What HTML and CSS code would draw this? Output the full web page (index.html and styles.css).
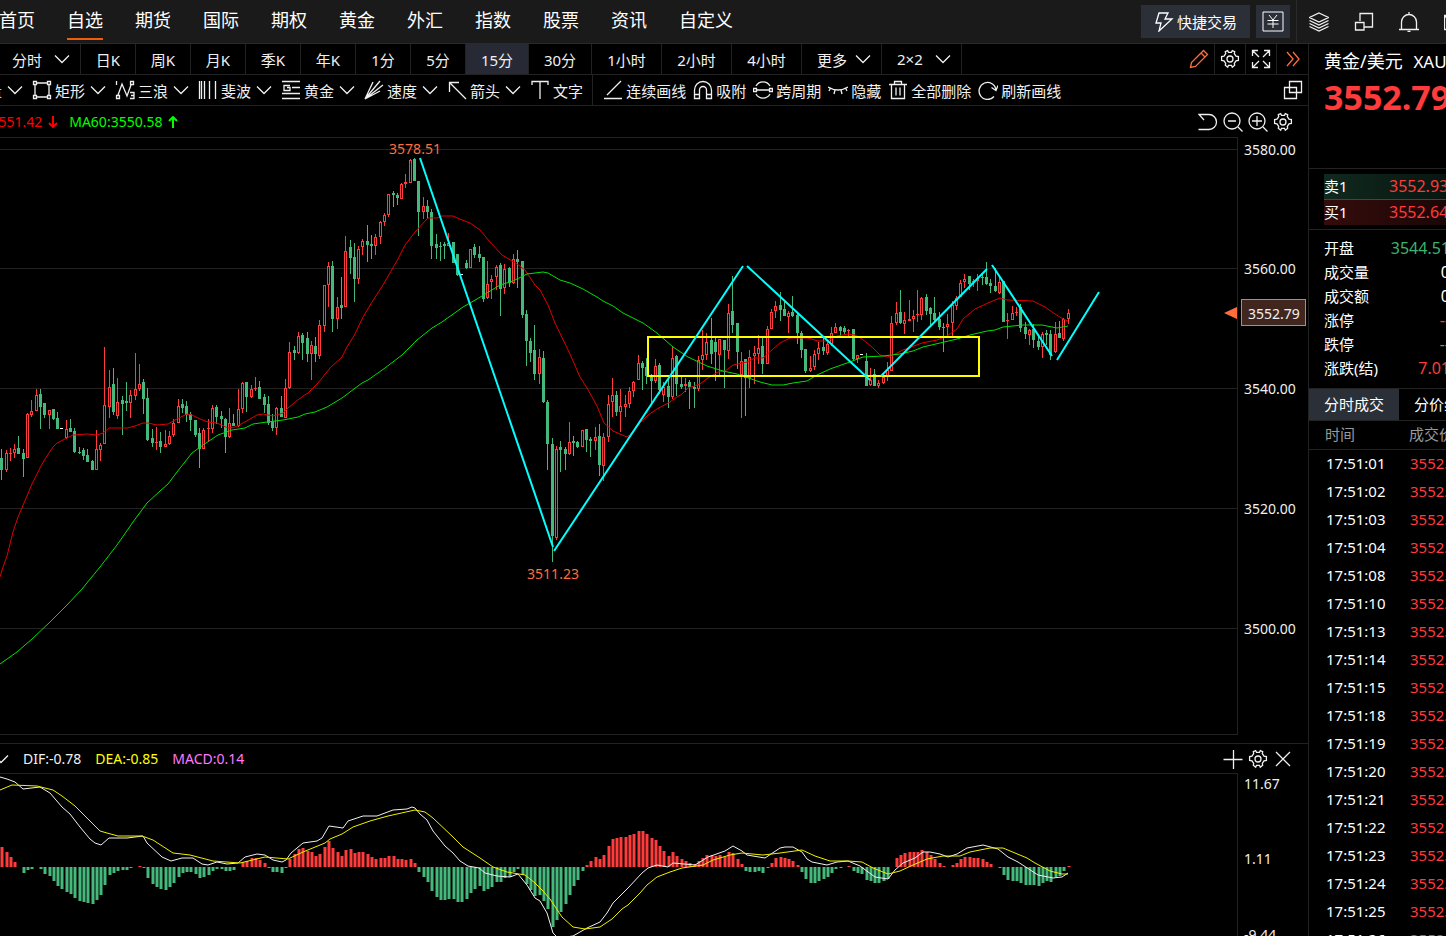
FILE: index.html
```html
<!DOCTYPE html>
<html lang="zh-CN">

<head>
    <meta charset="UTF-8">
    <meta name="viewport" content="width=device-width, initial-scale=1.0">
    <title>黄金/美元 XAUUSD 15分</title>
    <link rel="stylesheet" href="styles.css">
</head>

<body>
    <svg class="sprite" aria-hidden="true">
        <symbol id="chevron" viewBox="0 0 16 16">
            <path d="M1 4.500l7 7 7-7" />
        </symbol>
        <symbol id="gear" viewBox="0 0 20 20">
            <path d="M7.700 1.200l.8 1.600h3l.8-1.600 2.400 1-.4 1.900 1.700 2.600 2.400.3v3.900l-2.400.4-1.700 2.600.4 1.900-2.400 2-.8-2h-3l-.8 2-2.400-2 .4-1.900L4 11.300l-2.400-.4V7l2.400-.3 1.700-2.600-.4-1.900z" transform="translate(0 .5)" />
            <circle cx="10" cy="10" r="3" />
        </symbol>
    </svg>

    <header class="topbar">
        <nav class="main-nav">
            <a href="#">首页</a>
            <a href="#" class="active">自选</a>
            <a href="#">期货</a>
            <a href="#">国际</a>
            <a href="#">期权</a>
            <a href="#">黄金</a>
            <a href="#">外汇</a>
            <a href="#">指数</a>
            <a href="#">股票</a>
            <a href="#">资讯</a>
            <a href="#">自定义</a>
        </nav>
        <div class="trade-buttons">
            <button class="quick-trade">
                <svg class="icon" viewBox="0 0 20 20"><path d="M5 1h9l-3 6h7L5 19l2-8H2z" /></svg>
                快捷交易
            </button>
            <button class="currency" aria-label="货币">
                <svg viewBox="0 0 22 22"><path d="M1 1h20v19H1zM7 4l4 5 4-5M5.500 9.500h11M5.500 13h11M11 9v8" /></svg>
            </button>
        </div>
        <div class="top-icons">
            <button aria-label="图层">
                <svg class="icon" viewBox="0 0 20 20"><path d="M10 1l9.500 4.500L10 10 .5 5.500zM.5 8.500L10 13l9.500-4.500M.5 11.500L10 16l9.500-4.500M.5 14.500L10 19l9.500-4.500" /></svg>
            </button>
            <button aria-label="窗口">
                <svg class="icon" viewBox="0 0 20 20"><path d="M6 9V1.500h12.500V15H10M1.500 10.500H10V18H1.500z" /></svg>
            </button>
            <button aria-label="提醒">
                <svg class="icon" viewBox="0 0 20 20"><path d="M0 17.500h20M2.500 17V10a7.500 7.500 0 0 1 15 0v7M10 0v2.500M8.500 19.500h3" /></svg>
            </button>
            <button aria-label="邮件">
                <svg class="icon" viewBox="0 0 20 20"><path d="M.5 3.500h19v14H.5zM.5 4L10 11l9.500-7" /></svg>
            </button>
        </div>
    </header>

    <div class="workspace">
        <main class="chart-area">
            <div class="period-bar">
                <button class="period-menu">分时<svg class="chevron"><use href="#chevron" /></svg></button>
                <button>日K</button>
                <button>周K</button>
                <button>月K</button>
                <button>季K</button>
                <button>年K</button>
                <button>1分</button>
                <button>5分</button>
                <button class="medium active">15分</button>
                <button class="medium">30分</button>
                <button class="wide">1小时</button>
                <button class="wide">2小时</button>
                <button class="wide">4小时</button>
                <button class="period-menu">更多<svg class="chevron"><use href="#chevron" /></svg></button>
                <button class="period-menu">2×2<svg class="chevron"><use href="#chevron" /></svg></button>
                <div class="period-tools">
                    <button class="accent" aria-label="画线">
                        <svg class="icon" viewBox="0 0 20 20"><path d="M1.500 18.500l1-5L14.500 1.500l4 4L6.500 17.500zM12 4l4 4" /></svg>
                    </button>
                    <button aria-label="设置"><svg class="icon"><use href="#gear" /></svg></button>
                    <button aria-label="全屏">
                        <svg class="icon" viewBox="0 0 20 20"><path d="M1.500 7V1.500H7M13 1.500h5.500V7M18.500 13v5.500H13M7 18.500H1.500V13M2 2l6 6M18 2l-6 6M18 18l-6-6M2 18l6-6" /></svg>
                    </button>
                    <button class="accent" aria-label="展开">
                        <svg class="icon" viewBox="0 0 20 20"><path d="M4 3l6 7-6 7M10 3l6 7-6 7" /></svg>
                    </button>
                </div>
            </div>

            <div class="draw-bar">
                <div class="shape-tools">
                    <button>测量<svg class="chevron"><use href="#chevron" /></svg></button>
                    <button>
                        <svg class="icon" viewBox="0 0 20 20"><path d="M4 3h12M4 17h12M3 4v12M17 4v12M1.500 1.500h3v3h-3zM15.500 1.500h3v3h-3zM1.500 15.500h3v3h-3zM15.500 15.500h3v3h-3z" /></svg>
                        矩形<svg class="chevron"><use href="#chevron" /></svg>
                    </button>
                    <button>
                        <svg class="icon" viewBox="0 0 20 20"><path d="M1.500 1v4M3 15L7 4l5 12 4-11M1.500 15.500h3v3h-3zM15.500 1.500h3v3h-3zM15 12.500h4v6h-4M16 15.500h3" /></svg>
                        三浪<svg class="chevron"><use href="#chevron" /></svg>
                    </button>
                    <button>
                        <svg class="icon" viewBox="0 0 20 20"><path d="M1.500 1v18M3.500 1v18M6.500 1v18M11.500 1v18M17.500 1v18" /></svg>
                        斐波<svg class="chevron"><use href="#chevron" /></svg>
                    </button>
                    <button>
                        <svg class="icon" viewBox="0 0 20 20"><path d="M1 1.500h18M11 7.500h8M1 13.500h18M1 18.500h18M9 5.500H3v5h6v-3H6" /></svg>
                        黄金<svg class="chevron"><use href="#chevron" /></svg>
                    </button>
                    <button>
                        <svg class="icon" viewBox="0 0 20 20"><path d="M1 19L9 2M1 19L16 1M1 19L19 5M1 19l15-8" /></svg>
                        速度<svg class="chevron"><use href="#chevron" /></svg>
                    </button>
                    <button>
                        <svg class="icon" viewBox="0 0 20 20"><path d="M2.500 12V2.500H12M3 3l16 16" /></svg>
                        箭头<svg class="chevron"><use href="#chevron" /></svg>
                    </button>
                    <button>
                        <svg class="icon" viewBox="0 0 20 20"><path d="M2 5V1.500h16V5M10 2v17" /></svg>
                        文字
                    </button>
                </div>
                <div class="line-tools">
                    <button>
                        <svg class="icon" viewBox="0 0 20 20"><path d="M1 18.500h18M4 15L18 1" /></svg>
                        连续画线
                    </button>
                    <button>
                        <svg class="icon" viewBox="0 0 20 20"><path d="M1.500 18.500V10a8.500 8.500 0 0 1 17 0v8.500h-5V10a3.500 3.500 0 0 0-7 0v8.500zM1.500 14.500h5M13.500 14.500h5" /></svg>
                        吸附
                    </button>
                    <button>
                        <svg class="icon" viewBox="0 0 20 20"><path d="M3 6a8 8 0 0 1 14 0M3 14a8 8 0 0 0 14 0M3 10h14M.5 8.500h3v3h-3zM16.500 8.500h3v3h-3z" /></svg>
                        跨周期
                    </button>
                    <button>
                        <svg class="icon" viewBox="0 0 20 20"><path d="M0 7q10 6 20 0M2.500 8L1 11M7 10l-1 4M13 10l1 4M17.500 8l1.500 3" /></svg>
                        隐藏
                    </button>
                    <button>
                        <svg class="icon" viewBox="0 0 20 20"><path d="M1 4.500h18M6.500 4V1.500h7V4M3.500 5v13.500h13V5M8 7.500v8M12 7.500v8" /></svg>
                        全部删除
                    </button>
                    <button>
                        <svg class="icon" viewBox="0 0 20 20"><path d="M16 16.500a8.500 8.500 0 1 1 2-6.500M13.500 7.500l4.500 3 2-5" /></svg>
                        刷新画线
                    </button>
                </div>
                <button class="float-button" aria-label="浮动">
                    <svg class="icon" viewBox="0 0 20 20"><path d="M6.500 1.500h12v11h-12zM1.500 7.500h12v11h-12z" /></svg>
                </button>
            </div>

            <div class="indicator-bar ma-bar">
                <div class="indicator-values">
                    <span class="ma20">MA20:3551.42</span>
                    <svg class="trend ma20" viewBox="0 0 10 12"><path d="M5 0v10M1 7l4 4 4-4" /></svg>
                    <span class="ma60">MA60:3550.58</span>
                    <svg class="trend ma60" viewBox="0 0 10 12"><path d="M5 12V2M1 5l4-4 4 4" /></svg>
                </div>
                <div class="indicator-tools">
                    <button aria-label="撤销">
                        <svg class="icon" viewBox="0 0 20 20"><path d="M6 8L1 2.500h10a7.500 7.500 0 0 1 0 15H.5" /></svg>
                    </button>
                    <button aria-label="缩小">
                        <svg class="icon" viewBox="0 0 20 20"><circle cx="9" cy="9" r="8" /><path d="M5 9h8M15 15l4.500 4.500" /></svg>
                    </button>
                    <button aria-label="放大">
                        <svg class="icon" viewBox="0 0 20 20"><circle cx="9" cy="9" r="8" /><path d="M4 9h10M9 4v10M15 15l4.500 4.500" /></svg>
                    </button>
                    <button aria-label="指标设置"><svg class="icon"><use href="#gear" /></svg></button>
                </div>
            </div>
            <svg class="chart" id="price-chart" viewBox="0 137 1308 606" preserveAspectRatio="xMinYMin meet"></svg>

            <div class="indicator-bar macd-bar">
                <div class="indicator-values">
                    <svg class="chevron"><use href="#chevron" /></svg>
                    <span>DIF:-0.78</span>
                    <span class="dea">DEA:-0.85</span>
                    <span class="macd">MACD:0.14</span>
                </div>
                <div class="indicator-tools">
                    <button aria-label="添加">
                        <svg class="icon" viewBox="0 0 20 20"><path d="M.5 10.500h19M10.500 1v19" /></svg>
                    </button>
                    <button aria-label="MACD设置"><svg class="icon"><use href="#gear" /></svg></button>
                    <button aria-label="关闭">
                        <svg class="icon" viewBox="0 0 20 20"><path d="M3 3l14 14M17 3L3 17" /></svg>
                    </button>
                </div>
            </div>
            <svg class="chart" id="macd-chart" viewBox="0 773 1308 180" preserveAspectRatio="xMinYMin meet"></svg>
        </main>

        <aside class="quote">
            <div class="quote-head">
                <h1>黄金/美元 <span>XAUUSD</span></h1>
                <strong>3552.79</strong>
            </div>
            <div class="quote-book">
                <div class="sell"><span>卖1</span><b>3552.93</b></div>
                <div class="buy"><span>买1</span><b>3552.64</b></div>
            </div>
            <dl class="quote-stats">
                <div><dt>开盘</dt><dd class="down">3544.51</dd></div>
                <div><dt>成交量</dt><dd>0</dd></div>
                <div><dt>成交额</dt><dd>0</dd></div>
                <div><dt>涨停</dt><dd class="up">--</dd></div>
                <div><dt>跌停</dt><dd class="down">--</dd></div>
                <div><dt>涨跌(结)</dt><dd class="up">7.01</dd></div>
            </dl>
            <div class="quote-tabs">
                <button class="active">分时成交</button>
                <button>分价线</button>
            </div>
            <table class="ticks">
                <thead>
                    <tr><th>时间</th><th>成交价</th></tr>
                </thead>
                <tbody>
                    <tr><td>17:51:01</td><td>3552.79</td></tr>
                    <tr><td>17:51:02</td><td>3552.79</td></tr>
                    <tr><td>17:51:03</td><td>3552.79</td></tr>
                    <tr><td>17:51:04</td><td>3552.79</td></tr>
                    <tr><td>17:51:08</td><td>3552.79</td></tr>
                    <tr><td>17:51:10</td><td>3552.79</td></tr>
                    <tr><td>17:51:13</td><td>3552.79</td></tr>
                    <tr><td>17:51:14</td><td>3552.79</td></tr>
                    <tr><td>17:51:15</td><td>3552.79</td></tr>
                    <tr><td>17:51:18</td><td>3552.79</td></tr>
                    <tr><td>17:51:19</td><td>3552.79</td></tr>
                    <tr><td>17:51:20</td><td>3552.79</td></tr>
                    <tr><td>17:51:21</td><td>3552.79</td></tr>
                    <tr><td>17:51:22</td><td>3552.79</td></tr>
                    <tr><td>17:51:23</td><td>3552.79</td></tr>
                    <tr><td>17:51:24</td><td>3552.79</td></tr>
                    <tr><td>17:51:25</td><td>3552.79</td></tr>
                    <tr><td>17:51:26</td><td>3552.79</td></tr>
                </tbody>
            </table>
        </aside>
    </div>

    <script src="chart.js"></script>
</body>

</html>
```
FILE: styles.css
```css
* {
    box-sizing: border-box;
}

body {
    margin: 0;
    height: 100vh;
    display: flex;
    flex-direction: column;
    overflow: hidden;
    background-color: #000;
    color: #f0f0f0;
    font-family: "Noto Sans", "Noto Sans CJK SC", sans-serif;
    font-size: 15px;
}

button {
    display: flex;
    align-items: center;
    justify-content: center;
    margin: 0;
    padding: 0;
    border: none;
    background: none;
    color: inherit;
    font: inherit;
    white-space: nowrap;
    cursor: pointer;
}

svg {
    flex: none;
    fill: none;
    stroke: currentColor;
}

.sprite {
    display: none;
}

.icon {
    width: 20px;
    height: 20px;
    stroke-width: 1.3;
}

.chevron {
    width: 16px;
    height: 16px;
    stroke-width: 1.3;
}

/* Top bar */
.topbar {
    display: flex;
    flex: none;
    height: 44px;
    background-color: #1a1a1a;
    border-bottom: 1px solid #2a2a2a;
}

.main-nav {
    display: flex;
    gap: 32px;
    flex: 1;
    margin-left: -1px;
}

.main-nav a {
    height: 40px;
    line-height: 40px;
    font-size: 18px;
    color: #fff;
    text-decoration: none;
    white-space: nowrap;
}

.main-nav a.active {
    border-bottom: 2px solid #f25a0c;
}

.trade-buttons {
    display: flex;
    gap: 6px;
    padding: 5px 6px 5px 0;
    border-right: 1px solid #2a2a2a;
}

.trade-buttons button {
    background-color: #2b2f38;
    color: #fff;
}

.quick-trade {
    width: 109px;
    gap: 3px;
}

.currency {
    width: 34px;
}

.currency svg {
    width: 22px;
    height: 22px;
}

.top-icons {
    display: flex;
    gap: 25px;
    width: 149px;
    padding-left: 12px;
    overflow: hidden;
}

/* Chart column */
.workspace {
    display: flex;
    flex: 1;
    min-height: 0;
}

.chart-area {
    flex: 1;
    min-width: 0;
    overflow: hidden;
}

.period-bar {
    display: flex;
    height: 31px;
    border-bottom: 1px solid #222;
}

.period-bar > button {
    width: 55px;
    border-right: 1px solid #222;
}

.period-bar > .medium {
    width: 63px;
}

.period-bar > .wide {
    width: 70px;
}

.period-bar > .period-menu {
    justify-content: space-between;
    width: 80px;
    padding: 0 10px 0 15px;
}

.period-bar > .period-menu:first-child {
    width: 81px;
    padding-left: 12px;
}

.period-bar > .active {
    background-color: #272935;
}

.period-tools {
    display: flex;
    margin-left: auto;
}

.period-tools button {
    width: 31px;
    border-right: 1px solid #222;
}

.period-tools button:last-child {
    border-right: none;
}

.accent {
    color: #ff6e3c;
}

.draw-bar {
    display: flex;
    height: 31px;
    border-bottom: 1px solid #222;
}

.shape-tools {
    display: flex;
    gap: 9px;
    margin-left: -28px;
    padding-right: 9px;
    border-right: 1px solid #222;
}

.shape-tools button,
.line-tools button {
    gap: 3px;
}

.shape-tools .chevron {
    margin-left: 2px;
}

.line-tools {
    display: flex;
    gap: 7px;
    margin-left: 10px;
}

.float-button {
    margin-left: auto;
    margin-right: 5px;
}

.indicator-bar {
    display: flex;
    justify-content: space-between;
    height: 31px;
    padding-right: 15px;
    font-size: 14px;
}

.indicator-values {
    display: flex;
    align-items: center;
}

.indicator-tools {
    display: flex;
    gap: 5px;
}

.ma-bar .indicator-values {
    gap: 6px;
    margin-left: -51px;
}

.ma-bar span.ma60 {
    margin-left: 5px;
}

.trend {
    width: 10px;
    height: 12px;
    stroke-width: 2;
}

.ma20 {
    color: #f00;
}

.ma60 {
    color: #0f0;
}

.macd-bar {
    height: 30px;
    border-top: 1px solid #222;
}

.macd-bar .indicator-values {
    gap: 14px;
    margin-left: -7px;
}

.dea {
    color: #ff0;
}

.macd {
    color: #ff78ff;
}

.chart {
    display: block;
    width: 100%;
    font-size: 14px;
}

.chart text {
    fill: #f0f0f0;
    stroke: none;
}

.chart .extreme {
    fill: #ff6e3c;
    text-anchor: middle;
}

.frame,
.bars {
    shape-rendering: crispEdges;
}

.frame {
    stroke: #222;
}

.candle-up {
    stroke: #ff3c3c;
}

.candle-down {
    stroke: #45b97c;
    fill: #45b97c;
}

.candle-flat {
    stroke: #fff;
}

.bar-up {
    fill: #ff3c3c;
    stroke: none;
}

.bar-down {
    fill: #45b97c;
    stroke: none;
}

.bar-edge {
    opacity: 0.5;
}

.line-ma20 {
    stroke: #e00000;
}

.line-ma60 {
    stroke: #00e000;
}

.line-dif {
    stroke: #f0f0f0;
}

.line-dea {
    stroke: #f0f000;
}

.trend-line {
    stroke: #0ff;
    stroke-width: 2;
}

.range-box {
    stroke: #ff0;
    stroke-width: 2;
}

.price-tag {
    fill: #40261e;
    stroke: #ff6e3c;
}

.price-pointer {
    fill: #ff6e3c;
    stroke: none;
}

/* Quote panel */
.quote {
    flex: none;
    width: 138px;
    overflow: hidden;
    border-left: 1px solid #222;
    color: #fff;
    white-space: nowrap;
}

.quote-head {
    height: 125px;
    padding: 3px 15px;
    border-bottom: 1px solid #222;
}

.quote-head h1 {
    margin: 0;
    font-size: 18px;
    font-weight: normal;
    line-height: 28px;
}

.quote-head h1 span {
    margin-left: 6px;
    font-size: 17px;
}

.quote-head strong {
    display: block;
    font-size: 34px;
    line-height: 42px;
    color: #ff3b3b;
}

.quote-book {
    padding: 5px 0 4px 15px;
    border-bottom: 1px solid #222;
}

.quote-book div {
    display: flex;
    width: 260px;
    height: 25px;
    line-height: 25px;
}

.quote-book span {
    width: 65px;
}

.quote-book b {
    font-size: 16px;
    font-weight: normal;
    color: #ff3b3b;
}

.quote-book .sell {
    height: 26px;
    background: linear-gradient(to right, #10291e, #000);
    border-bottom: 1px solid #444;
}

.quote-book .buy {
    background: linear-gradient(to right, #350c0c, #000);
}

.quote-stats {
    width: 141px;
    margin: 0;
    padding: 6px 0 8px 15px;
}

.quote-stats div {
    display: flex;
    justify-content: space-between;
    line-height: 24px;
}

.quote-stats dd {
    margin: 0;
    font-size: 16px;
}

.up {
    color: #ff3b3b;
}

.down {
    color: #3db46d;
}

.quote-tabs {
    display: flex;
    height: 33px;
    border-top: 1px solid #222;
    border-bottom: 1px solid #222;
}

.quote-tabs button {
    padding: 0 15px 2px;
}

.quote-tabs .active {
    background-color: #2b2f38;
}

.ticks {
    width: 260px;
    table-layout: fixed;
    border-collapse: collapse;
}

.ticks th {
    height: 28px;
    padding: 0 0 2px 16px;
    border-bottom: 1px solid #222;
    color: #999;
    font-weight: normal;
    text-align: left;
}

.ticks td {
    height: 28px;
    padding: 0 0 0 17px;
}

.ticks th:first-child {
    width: 84px;
}

.ticks td:last-child {
    color: #ff3b3b;
}
```
FILE: chart.js
```javascript
const STEP = 4.3;
const PLOT_RIGHT = 1237;
const ZERO = 867;

// direction (u = up, d = down, n = unchanged), high, body top, body bottom, low
const candles = `
d 449 458 470 480,u 450 453 470 472,u 448 453 454 461,u 444 449 453 458,d 436 448 454 454,d 449 453 459 477,
u 413 414 458 458,u 400 411 415 417,u 389 395 411 411,d 389 394 407 429,d 403 403 415 418,u 410 410 415 429,
d 409 409 419 420,d 412 418 429 429,n 428 428 429 429,u 420 429 438 439,d 419 428 432 432,d 428 431 452 453,
d 447 452 453 454,d 448 450 456 460,d 449 455 462 462,d 460 461 470 470,u 430 449 470 470,u 443 445 450 461,
u 347 405 444 444,u 370 387 407 418,d 368 384 412 415,u 378 402 416 419,d 396 400 404 435,d 382 401 403 411,
u 390 395 403 418,u 353 389 396 400,u 364 384 389 391,d 379 382 399 414,d 388 398 440 441,d 429 438 443 447,
u 427 442 443 450,d 432 441 447 453,u 430 444 447 447,u 431 436 444 445,u 419 423 435 437,u 399 406 423 423,
d 399 404 408 413,d 401 406 415 422,d 412 414 420 431,d 420 420 435 437,d 428 433 449 468,u 428 430 449 449,
u 419 428 429 442,u 405 408 429 433,d 405 407 417 424,d 411 416 419 428,d 418 419 437 453,u 408 423 437 438,
d 414 423 426 426,u 389 409 426 427,u 382 383 409 413,d 382 382 397 412,u 385 389 397 398,u 377 388 389 391,
d 381 387 399 399,d 394 397 405 413,d 396 404 423 425,d 414 421 428 431,u 407 408 428 435,d 396 408 417 417,
u 379 388 418 418,u 342 352 388 389,d 346 350 353 360,u 332 336 353 354,d 333 335 343 360,d 332 338 354 362,
u 341 345 354 380,d 337 346 354 362,u 320 325 356 359,u 285 285 326 332,u 262 266 285 307,d 261 266 319 332,
u 297 307 319 329,d 277 305 308 319,u 236 251 307 307,d 240 247 258 274,d 243 257 279 302,u 246 249 279 284,
u 239 241 247 255,d 225 241 245 262,d 235 244 246 259,u 234 237 246 255,u 221 222 237 244,u 213 215 222 226,
u 194 194 215 217,d 191 193 195 207,d 193 195 198 205,u 183 184 199 199,u 174 182 184 188,u 159 160 183 183,
d 158 159 181 181,d 181 181 212 236,u 197 206 212 219,d 200 206 212 218,d 209 212 246 259,d 234 244 248 259,
d 242 246 247 261,d 242 244 246 259,u 233 243 246 246,d 242 242 263 263,d 254 254 275 276,n 274 274 275 275,
d 260 263 268 269,u 249 249 268 268,d 244 247 255 258,d 246 254 258 262,d 257 257 299 302,u 261 284 298 299,
u 275 279 282 299,u 265 267 277 290,d 263 265 289 316,u 264 269 288 294,d 267 268 283 287,u 254 259 283 284,
d 250 259 262 288,d 261 261 315 318,d 310 314 341 366,d 338 341 353 362,d 325 350 374 380,u 349 357 374 384,
d 351 358 402 403,d 400 402 444 470,d 438 444 536 562,u 446 449 538 540,d 441 447 450 472,d 447 449 454 470,
u 422 442 454 455,d 436 441 443 456,d 441 442 447 448,u 430 430 447 447,d 429 429 440 452,d 437 439 441 457,
u 427 437 441 450,d 424 436 465 476,u 433 437 466 481,u 395 404 437 442,u 378 395 402 417,d 391 395 412 416,
u 389 406 412 432,u 395 404 407 417,u 387 391 404 408,u 381 382 391 397,u 355 363 380 380,d 361 363 368 390,
d 358 367 376 384,d 374 375 381 403,u 359 366 381 383,d 363 365 390 394,u 382 387 395 402,d 376 386 397 408,
u 347 358 397 399,d 355 356 384 396,d 376 384 387 389,u 378 384 386 392,d 380 382 387 409,d 382 387 389 408,
u 356 360 389 391,u 330 355 360 370,u 333 342 355 360,d 318 340 354 364,d 336 342 352 381,u 339 339 355 377,
d 340 340 350 388,u 304 313 351 359,d 276 311 325 333,d 323 323 352 369,u 352 361 375 418,d 359 359 378 416,
u 350 357 378 388,u 346 353 356 384,u 335 348 354 364,d 337 346 364 374,u 326 329 364 364,u 309 312 329 329,
u 301 306 311 318,d 292 305 310 321,d 302 309 316 316,u 311 313 317 333,d 296 312 316 317,d 313 315 333 344,
d 331 333 350 358,d 349 349 371 373,u 356 368 371 372,u 350 354 367 370,u 342 348 354 360,d 337 347 351 355,
u 342 344 353 355,u 327 333 344 346,u 323 327 333 333,d 326 327 331 336,d 326 328 332 334,u 329 330 331 336,
d 329 329 359 361,u 355 355 359 363,n 354 354 355 355,d 353 361 386 386,u 368 380 385 386,d 369 374 386 386,
u 380 383 386 388,u 373 377 383 384,u 362 370 376 381,u 316 323 371 371,u 302 313 323 325,d 290 312 323 324,
u 312 320 324 334,u 300 319 321 321,u 310 316 319 332,u 290 314 315 322,u 297 298 315 320,d 294 297 311 315,
d 307 308 314 327,d 297 313 320 322,d 312 319 327 330,d 323 327 328 352,u 314 324 327 336,u 301 305 323 336,
u 296 298 306 310,u 280 283 297 297,u 274 279 282 288,d 276 276 284 290,u 279 281 282 287,u 274 278 281 291,
d 273 277 278 285,d 262 277 284 285,d 279 283 286 293,d 268 286 291 292,u 277 282 293 294,d 281 281 322 322,
u 313 320 321 339,u 306 313 320 320,u 307 312 313 316,d 304 307 328 332,d 322 327 334 339,u 329 330 335 345,
d 324 329 340 348,d 335 341 347 350,u 332 334 347 358,d 330 333 335 345,d 330 334 355 360,u 322 334 352 353,
d 321 333 338 338,u 318 319 339 341,u 309 313 319 324`.split(',').map(row => row.trim().split(' '));

const histogram = [
    20, 15, 10, 5, 0, -6, -3, -2, 0, -2, -7, -9, -14, -19, -22, -25, -27, -31, -34, -35, -36, -37, -33, -28, -18,
    -8, -6, -4, -3, -3, -1, 0, 1, -1, -11, -17, -20, -22, -23, -20, -16, -10, -6, -5, -5, -7, -11, -10, -8, -4,
    -2, -2, -4, -4, -3, 0, 5, 6, 9, 9, 7, 4, -1, -5, -5, -6, -1, 8, 13, 18, 19, 16, 15, 11, 13,
    20, 26, 19, 15, 11, 17, 18, 14, 15, 15, 13, 10, 8, 9, 9, 11, 11, 8, 8, 7, 8, 4, -5, -10, -15,
    -24, -30, -33, -33, -32, -32, -35, -35, -32, -26, -22, -19, -24, -22, -20, -15, -15, -11, -10, -5, -2, -8, -17, -23, -29,
    -28, -34, -42, -60, -53, -45, -37, -28, -19, -13, -4, 2, 6, 10, 8, 12, 21, 28, 29, 30, 30, 32, 33, 36, 36,
    33, 29, 27, 21, 16, 11, 15, 11, 8, 6, 4, 3, 6, 9, 12, 12, 11, 12, 10, 15, 14, 8, 3, -4, -5,
    -5, -4, -6, -1, 4, 9, 10, 9, 8, 6, 2, -5, -12, -16, -16, -14, -12, -10, -6, -2, -1, 0, 1, -4, -6,
    -7, -13, -14, -16, -16, -14, -12, 0, 9, 12, 14, 15, 15, 15, 17, 15, 12, 8, 4, 1, 0, 2, 4, 8, 10,
    10, 9, 9, 8, 5, 3, 0, -1, -8, -13, -14, -14, -16, -18, -18, -18, -19, -16, -14, -15, -10, -9, -4, 1
];

const ma20 = `0,577 2,570 7,556 13,532 18,517 24,503 32,484 40,468 45,459 53,447 57,443 65,439 73,435 87,434 97,435
103,433 109,428 127,428 135,426 143,423 148,423 157,425 168,424 175,420 187,414 192,415 200,419 208,422 217,423
228,428 235,427 243,423 257,415 263,414 273,416 283,413 289,407 303,396 308,393 318,383 330,368 342,357 347,347
355,334 363,317 372,302 383,285 398,259 405,245 415,232 428,218 437,218 442,216 453,216 462,220 470,223 480,230
490,242 502,255 517,264 525,270 535,285 540,290 548,305 555,323 570,354 580,377 587,388 592,397 597,406 604,423
613,431 627,437 630,435 640,423 648,415 657,409 670,402 677,397 682,394 688,388 700,384 708,378 718,372 725,371
733,365 747,362 755,358 763,358 772,350 780,343 790,338 808,338 818,341 827,341 837,336 848,334 855,335 862,339
872,347 880,355 887,357 893,355 903,350 922,343 937,340 947,336 957,329 963,319 975,309 988,303 1000,298 1007,300
1033,301 1045,307 1052,312 1063,319 1068,321`;

const ma60 = `0,664 17,652 32,639 50,622 67,605 82,589 100,567 117,545 133,522 147,503 160,491 168,484 177,472 192,453
203,445 218,435 232,430 245,428 253,424 267,422 283,420 298,417 305,414 315,412 327,407 342,398 362,383 368,380
385,368 402,355 417,340 432,328 442,322 463,307 470,303 477,299 487,293 500,285 513,281 527,274 543,272 548,273
560,280 570,283 583,289 597,297 603,301 613,306 623,313 643,323 657,333 673,347 688,357 707,366 723,371 737,374
760,382 772,385 783,385 793,383 807,381 817,375 830,369 847,363 863,357 883,356 900,354 913,351 923,347 957,339
970,335 987,331 995,330 1003,327 1023,325 1042,325 1057,328 1068,326`;

const dif = `0,777 7,779 15,782 23,789 40,787 45,790 50,793 62,807 70,814 80,827 90,839 95,843 101,845 109,838 127,838
143,836 147,843 162,857 171,861 182,858 193,858 202,864 208,865 217,862 227,864 238,863 245,857 257,854 265,855
273,860 282,862 286,860 291,853 303,843 317,841 322,838 329,826 343,828 348,821 363,816 377,816 393,810 407,809
412,807 415,808 420,814 427,820 433,831 445,846 453,853 460,861 468,866 479,868 485,873 497,876 510,877 518,874
527,885 535,898 540,901 547,913 553,933 558,938 573,936 587,928 600,922 607,913 613,903 622,894 628,888 642,873
648,868 657,865 668,867 673,863 695,865 708,857 725,851 733,846 742,851 747,855 765,858 780,848 785,847 793,847
802,852 807,859 812,862 827,865 837,862 848,861 860,866 875,877 888,879 895,870 903,863 915,858 923,852 930,852
940,854 948,857 957,854 967,848 983,845 998,849 1008,857 1018,862 1038,875 1053,878 1062,877 1068,873`;

const dea = `0,790 12,785 37,786 53,790 62,796 75,806 88,819 100,831 107,833 118,836 142,836 153,840 173,853 190,855
213,861 240,863 265,857 288,859 303,852 325,843 330,839 342,834 353,827 370,821 388,816 415,810 425,812 433,818
453,837 463,847 480,858 493,867 507,872 525,875 535,883 543,891 550,899 562,917 573,927 585,929 600,927 612,919
622,909 628,905 635,898 640,893 647,885 657,877 670,872 682,868 703,865 713,860 730,855 742,853 763,855 780,853
802,850 815,856 830,861 848,861 862,862 873,868 888,874 900,871 913,865 927,859 943,856 960,856 970,852 990,848
1003,848 1015,853 1027,858 1035,863 1050,871 1062,874 1068,874`;

const columnX = index => Math.floor(1.75 + STEP * index);

function drawCandle([direction, high, top, bottom, low], index) {
    const x = columnX(index);
    if (direction === 'n') {
        return `<path class="candle-flat" d="M${x - 1} ${+top + 0.5}h3" />`;
    }
    const height = Math.max(bottom - top - 1, 0);
    const body = height === 0
        ? `M${x - 1} ${+top + 0.5}h3`
        : `M${x - 0.5} ${+top + 0.5}h2v${height}h-2z`;
    const name = direction === 'u' ? 'candle-up' : 'candle-down';
    return `<path class="${name}" d="M${x + 0.5} ${high}V${top}${body}M${x + 0.5} ${bottom}V${low}" />`;
}

// two bright columns with a dimmer one on each side
function drawBar(value, index) {
    const x = columnX(index);
    const y = value > 0 ? ZERO - value : ZERO;
    const height = Math.abs(value);
    const name = value > 0 ? 'bar-up' : 'bar-down';
    return `<rect class="${name} bar-edge" x="${x - 1}" y="${y}" width="4" height="${height}" />
        <rect class="${name}" x="${x}" y="${y}" width="2" height="${height}" />`;
}

const gridLevels = [3580, 3560, 3540, 3520, 3500];
const gridY = [149, 268, 388, 508, 628];

document.getElementById('price-chart').innerHTML = `
    <path class="frame" d="M0 137.5H${PLOT_RIGHT}.5V734.5H0${gridY.map(y => `M0 ${y}.5H${PLOT_RIGHT}`).join('')}" />
    ${gridLevels.map((level, i) => `<text x="1244" y="${gridY[i] + 6}">${level.toFixed(2)}</text>`).join('')}
    <g class="bars">${candles.map(drawCandle).join('')}</g>
    <polyline class="line-ma20" points="${ma20}" />
    <polyline class="line-ma60" points="${ma60}" />
    <rect class="range-box" x="648" y="337" width="331" height="39" />
    <path class="trend-line" d="M420 158L553 547M554 551L743 266M747 266L870 380M881 376L987 269M992 265L1052 356M1057 360L1099 292" />
    <text class="extreme" x="415" y="154">3578.51</text>
    <text class="extreme" x="553" y="579">3511.23</text>
    <path class="price-pointer" d="M1224 313l13-6v12z" />
    <rect class="price-tag" x="1241.500" y="299.500" width="64" height="26" />
    <text x="1248" y="319">3552.79</text>`;

document.getElementById('macd-chart').innerHTML = `
    <path class="frame" d="M0 773.5H${PLOT_RIGHT}.5V960" />
    <g class="bars">${histogram.map(drawBar).join('')}</g>
    <polyline class="line-dif" points="${dif}" />
    <polyline class="line-dea" points="${dea}" />
    <text x="1244" y="789">11.67</text>
    <text x="1244" y="864">1.11</text>
    <text x="1244" y="940">-9.44</text>`;
```
